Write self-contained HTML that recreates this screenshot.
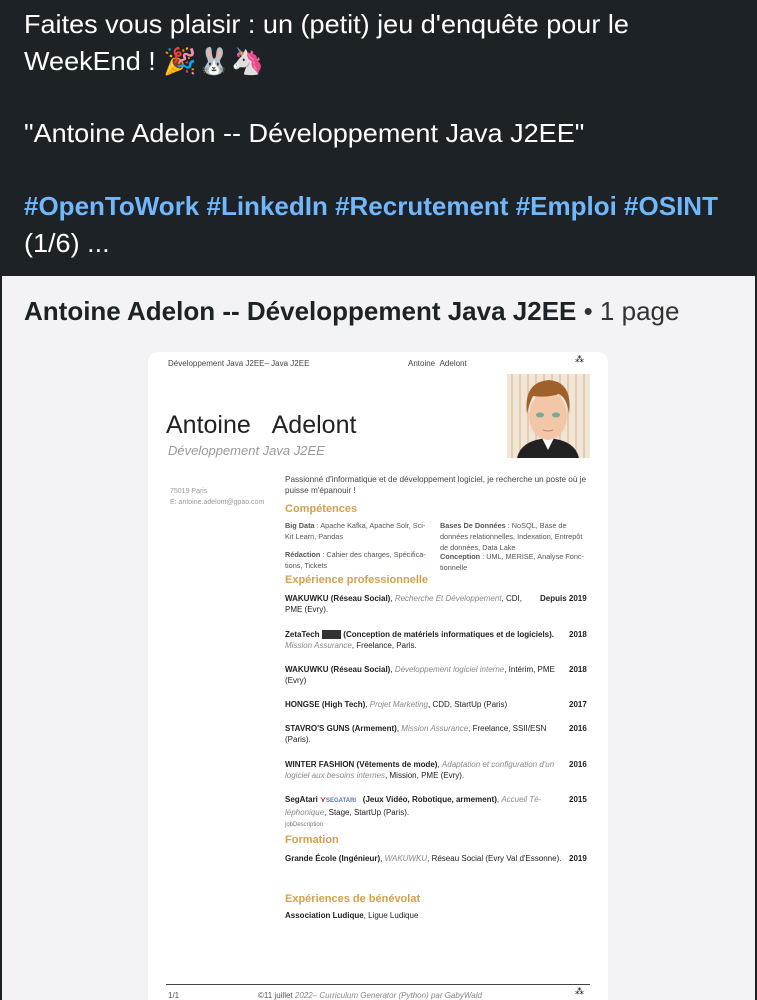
<!DOCTYPE html>
<html><head><meta charset="utf-8"><style>
*{margin:0;padding:0;box-sizing:border-box}
html,body{width:757px;height:1000px;overflow:hidden}
body{background:#1d2226;font-family:"Liberation Sans",sans-serif;position:relative}
.t{position:absolute;left:24px;color:#fff;font-size:26px;white-space:nowrap;transform:scaleX(1.04);transform-origin:left center;line-height:30px}
.blue{color:#71b7fb;font-weight:bold;transform:scaleX(1.0)}
#card{position:absolute;left:2px;top:276px;width:753px;height:724px;background:#f3f3f5}
#hd{position:absolute;left:24px;top:296px;font-size:26px;font-weight:bold;color:#1d2226;white-space:nowrap;transform:scaleX(1.0);transform-origin:left center;line-height:30px}
#hd span{font-weight:normal;color:#333}
#doc{position:absolute;left:148px;top:352px;width:460px;height:660px;background:#fff;border-radius:10px;color:#222;font-size:8px}
#doc div{position:absolute;white-space:nowrap;line-height:11px}
.g{color:#999}
.o{color:#d4a04d;font-size:11px!important;font-weight:bold}
b{font-weight:bold}
i{color:#888}
.yr{font-weight:bold;left:421px}
.c{font-size:7.3px;color:#555}
</style></head><body>
<div class="t" style="top:9px">Faites vous plaisir : un (petit) jeu d'enquête pour le</div>
<div class="t" style="top:46px">WeekEnd ! 🎉🐰🦄</div>
<div class="t" style="top:118px">"Antoine Adelon -- Développement Java J2EE"</div>
<div class="t blue" style="top:191px">#OpenToWork #LinkedIn #Recrutement #Emploi #OSINT</div>
<div class="t" style="top:228px">(1/6) ...</div>
<div id="card"></div>
<div id="hd">Antoine Adelon -- Développement Java J2EE <span>• 1 page</span></div>
<div id="doc">
<div style="left:20px;top:6px;color:#444">Développement Java J2EE– Java J2EE</div>
<div style="left:260px;top:6px;color:#444">Antoine &nbsp;Adelont</div>
<div style="left:427px;top:2px;font-size:9px">⁂</div>
<svg style="position:absolute;left:359px;top:22px" width="83" height="84" viewBox="0 0 83 84">
<rect width="83" height="84" fill="#f1e6d6"/>
<g stroke="#e2cdb0" stroke-width="2"><path d="M5 0V84M13 0V84M21 0V84M29 0V84M37 0V84M45 0V84M53 0V84M61 0V84M69 0V84M77 0V84"/></g>
<path d="M10 84 Q14 66 41 64 Q68 66 72 84Z" fill="#222"/>
<path d="M35 64 L41 76 L47 64Z" fill="#fff"/>
<ellipse cx="41" cy="42" rx="19" ry="24" fill="#f3c6a8"/>
<path d="M20 40 Q16 8 42 6 Q66 8 62 40 Q60 24 52 20 Q40 24 26 22 Q22 30 20 40Z" fill="#a0602c"/>
<ellipse cx="33" cy="41" rx="4" ry="2.5" fill="#7a9"/><ellipse cx="49" cy="41" rx="4" ry="2.5" fill="#7a9"/>
<path d="M36 56 Q41 58 46 56" stroke="#c08070" fill="none"/>
</svg>
<div style="left:18px;top:58px;font-size:25px;line-height:30px;color:#222">Antoine &nbsp;&nbsp;Adelont</div>
<div style="left:20px;top:91px;font-size:13px;line-height:16px;color:#999;font-style:italic">Développement Java J2EE</div>
<div class="g" style="left:22px;top:134px;font-size:7px">75019 Paris<br>E: antoine.adelont@gpao.com</div>
<div style="left:137px;top:122px;color:#444;font-size:8.2px">Passionné d'informatique et de développement logiciel, je recherche un poste où je<br>puisse m'épanouir !</div>
<div class="o" style="left:137px;top:152px">Compétences</div>
<div class="c" style="left:137px;top:168px"><b>Big Data</b> : Apache Kafka, Apache Solr, Sci-<br>Kit Learn, Pandas</div>
<div class="c" style="left:292px;top:168px"><b>Bases De Données</b> : NoSQL, Base de<br>données relationnelles, Indexation, Entrepôt<br>de données, Data Lake</div>
<div class="c" style="left:137px;top:197px"><b>Rédaction</b> : Cahier des charges, Spécifica-<br>tions, Tickets</div>
<div class="c" style="left:292px;top:199px"><b>Conception</b> : UML, MERISE, Analyse Fonc-<br>tionnelle</div>
<div class="o" style="left:137px;top:223px">Expérience professionnelle</div>
<div style="left:137px;top:241px"><b>WAKUWKU (Réseau Social)</b>, <i>Recherche Et Développement</i>, CDI,<br>PME (Evry).</div><div class="yr" style="left:392px;top:241px"><b>Depuis 2019</b></div>
<div style="left:137px;top:277px"><b>ZetaTech <span style="background:#333;color:#333">■■■■</span> (Conception de matériels informatiques et de logiciels).</b><br><i>Mission Assurance</i>, Freelance, Paris.</div><div class="yr" style="top:277px">2018</div>
<div style="left:137px;top:312px"><b>WAKUWKU (Réseau Social)</b>, <i>Développement logiciel interne</i>, Intérim, PME<br>(Evry)</div><div class="yr" style="top:312px">2018</div>
<div style="left:137px;top:347px"><b>HONGSE (High Tech)</b>, <i>Projet Marketing</i>, CDD, StartUp (Paris)</div><div class="yr" style="top:347px">2017</div>
<div style="left:137px;top:371px"><b>STAVRO'S GUNS (Armement)</b>, <i>Mission Assurance</i>, Freelance, SSII/ESN<br>(Paris).</div><div class="yr" style="top:371px">2016</div>
<div style="left:137px;top:407px"><b>WINTER FASHION (Vêtements de mode)</b>, <i>Adaptation et configuration d'un</i><br><i>logiciel aux besoins internes</i>, Mission, PME (Evry).</div><div class="yr" style="top:407px">2016</div>
<div style="left:137px;top:442px"><b>SegAtari <span style="color:#c33">⋎</span><span style="color:#57a;font-size:6px">SEGATARI</span> &nbsp;&nbsp;(Jeux Vidéo, Robotique, armement)</b>, <i>Accueil Té-</i><br><i>léphonique</i>, Stage, StartUp (Paris).<br><span style="font-size:6px;color:#777">jobDescription</span></div><div class="yr" style="top:442px">2015</div>
<div class="o" style="left:137px;top:483px">Formation</div>
<div style="left:137px;top:501px"><b>Grande École (Ingénieur)</b>, <i>WAKUWKU</i>, Réseau Social (Evry Val d'Essonne).</div><div class="yr" style="top:501px">2019</div>
<div class="o" style="left:137px;top:542px">Expériences de bénévolat</div>
<div style="left:137px;top:558px"><b>Association Ludique</b>, Ligue Ludique</div>
<div style="left:18px;top:632px;width:424px;height:1px;border-top:1px solid #444"></div>
<div style="left:20px;top:638px;color:#555">1/1</div>
<div style="left:110px;top:638px;color:#555">©11 juillet <i>2022– Curriculum Generator (Python) par GabyWald</i></div>
<div style="left:427px;top:634px;font-size:9px">⁂</div>
</div>
</body></html>
